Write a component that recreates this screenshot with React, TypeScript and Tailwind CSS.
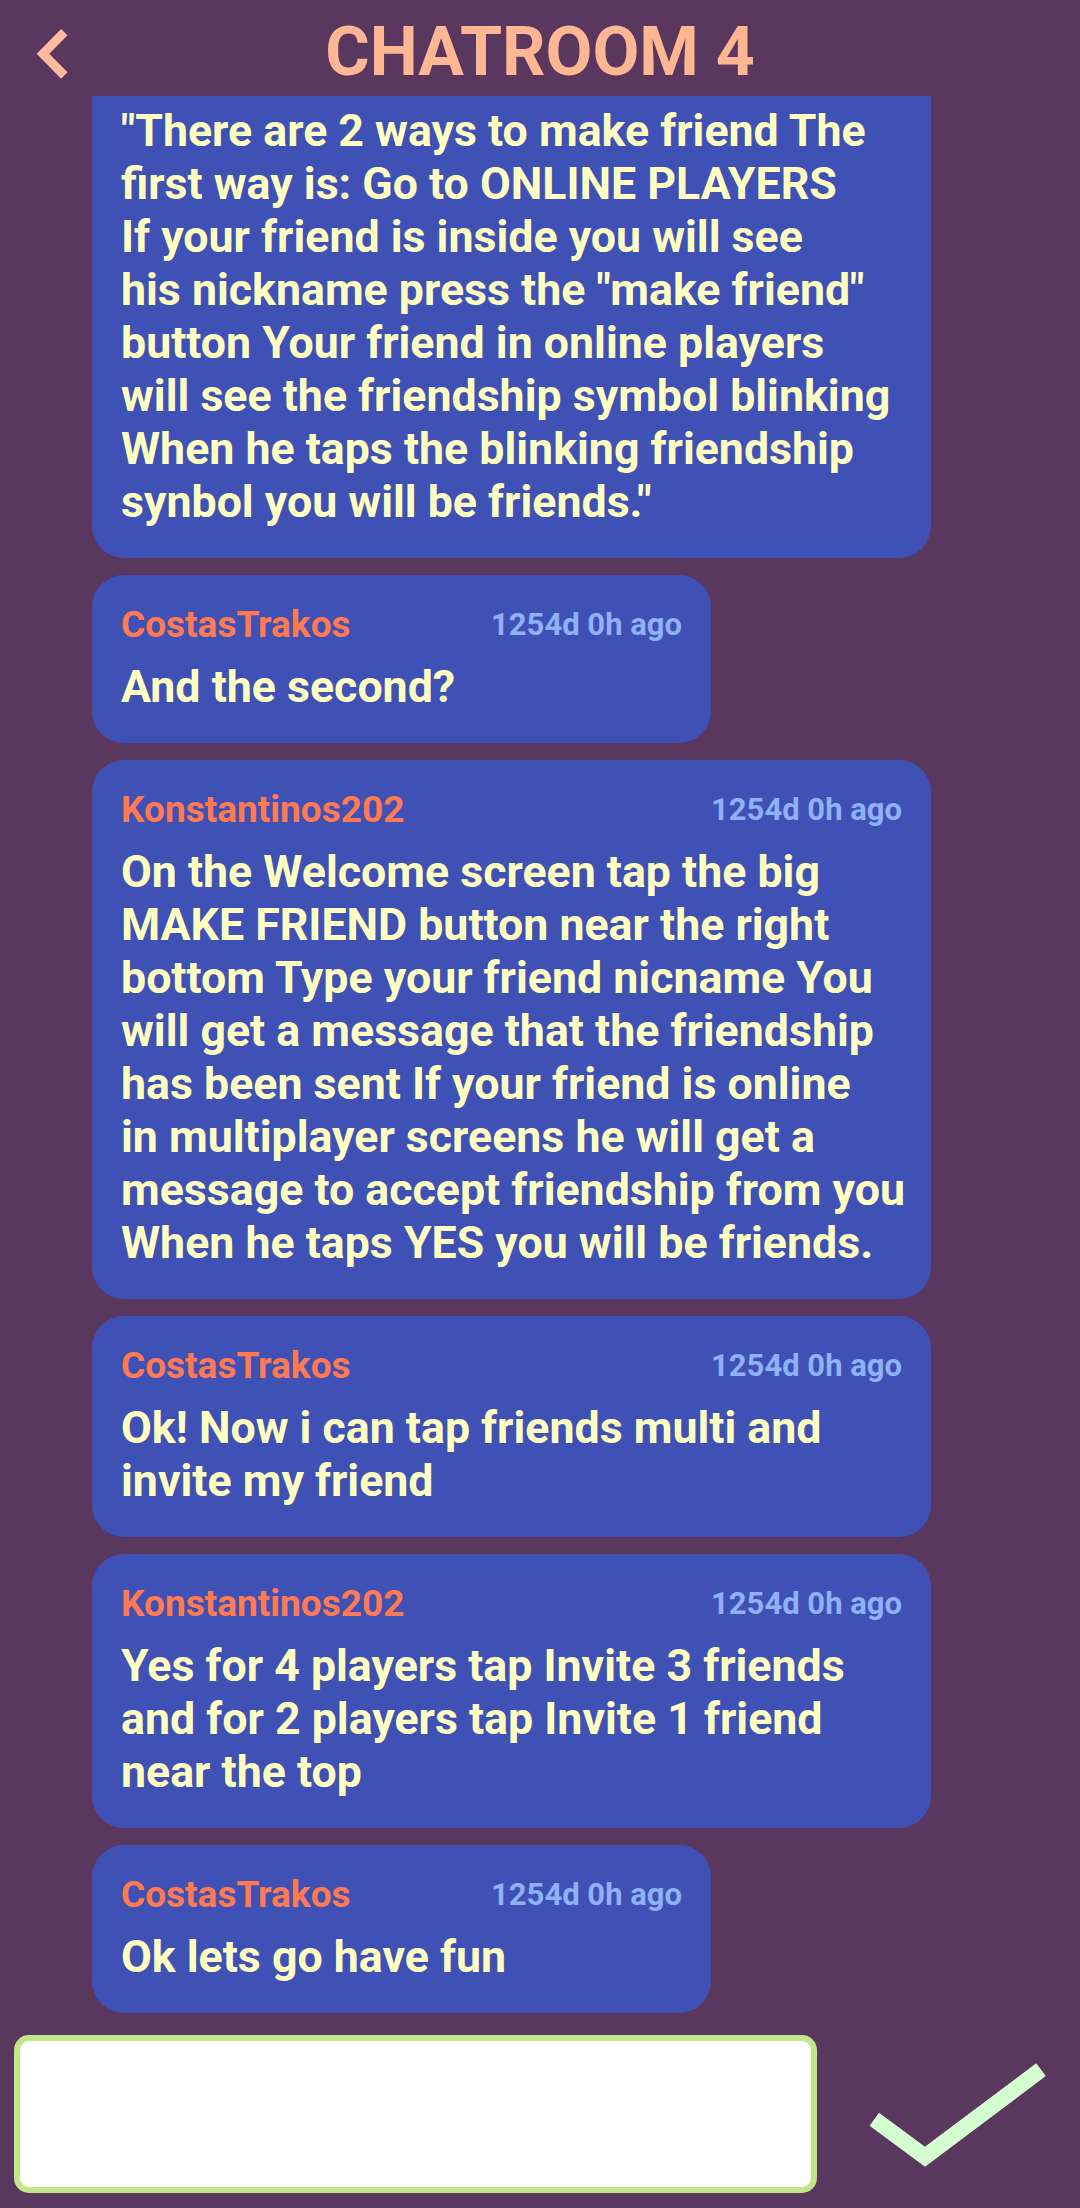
import React from "react";

type Msg = {
  name?: string;
  time?: string;
  lines: string[];
  wide?: boolean;
  clipped?: boolean;
};

const messages: Msg[] = [
  {
    clipped: true,
    wide: true,
    lines: [
      "\"There are 2 ways to make friend The",
      "first way is: Go to ONLINE PLAYERS",
      "If your friend is inside you will see",
      "his nickname press the \"make friend\"",
      "button Your friend in online players",
      "will see the friendship symbol blinking",
      "When he taps the blinking friendship",
      "synbol you will be friends.\"",
    ],
  },
  { name: "CostasTrakos", time: "1254d 0h ago", lines: ["And the second?"] },
  {
    name: "Konstantinos202",
    time: "1254d 0h ago",
    wide: true,
    lines: [
      "On the Welcome screen tap the big",
      "MAKE FRIEND button near the right",
      "bottom Type your friend nicname You",
      "will get a message that the friendship",
      "has been sent If your friend is online",
      "in multiplayer screens he will get a",
      "message to accept friendship from you",
      "When he taps YES you will be friends.",
    ],
  },
  {
    name: "CostasTrakos",
    time: "1254d 0h ago",
    wide: true,
    lines: ["Ok! Now i can tap friends multi and", "invite my friend"],
  },
  {
    name: "Konstantinos202",
    time: "1254d 0h ago",
    wide: true,
    lines: [
      "Yes for 4 players tap Invite 3 friends",
      "and for 2 players tap Invite 1 friend",
      "near the top",
    ],
  },
  { name: "CostasTrakos", time: "1254d 0h ago", lines: ["Ok lets go have fun"] },
];

const Bubble: React.FC<{ msg: Msg }> = ({ msg }) => {
  return (
    <div
      className={`bg-[#3f51b5] px-[29px] pb-[29px] ${msg.wide ? "w-[839px]" : "w-[619px]"} ${
        msg.clipped ? "rounded-b-[32px] pt-[9px]" : "rounded-[32px] pt-[29px]"
      }`}
    >
      {msg.name && (
        <div className="flex items-center justify-between h-[42px] mb-[15px]">
          <span className="text-[37px] leading-[42px] font-bold text-[#ff7a50]">{msg.name}</span>
          <span className="text-[31px] leading-[42px] font-bold text-[#8fb1f7]">{msg.time}</span>
        </div>
      )}
      <div className="text-[44.7px] leading-[53px] font-bold text-[#ffffc2]">
        {msg.lines.map((l, i) => (
          <span key={i} className="block whitespace-nowrap">
            {l}
          </span>
        ))}
      </div>
    </div>
  );
};

export default function App() {
  return (
    <div
      className="w-[1080px] h-[2208px] bg-[#5a375e] flex flex-col overflow-hidden"
      style={{ fontFamily: "Roboto, 'Noto Sans', sans-serif" }}
    >
      <header className="h-[96px] shrink-0 grid grid-cols-[1fr_auto_1fr] items-center pt-[8px]">
        <div className="pl-[30px] flex items-center">
          <svg width="45" height="57" viewBox="0 0 45 57" fill="none">
            <polyline
              points="34.3,8.2 13,29.8 34.3,51.5"
              stroke="#ffbb9c"
              strokeWidth="9"
              strokeLinecap="butt"
              strokeLinejoin="miter"
            />
          </svg>
        </div>
        <h1 className="text-[68px] leading-[78px] font-bold text-[#ffb692]">CHATROOM 4</h1>
        <div />
      </header>

      <div className="flex flex-col gap-[17px] pl-[92px]">
        {messages.map((m, i) => (
          <Bubble key={i} msg={m} />
        ))}
      </div>

      <div className="flex items-start mt-[22px]">
        <div className="ml-[14px] w-[803px] h-[158px] bg-white border-[6px] border-[#c2e68a] rounded-[15px]" />
        <svg className="ml-[43px] mt-[23px]" width="195" height="120" viewBox="0 0 195 120" fill="none">
          <polyline
            points="14.3,61.3 65,98.7 181,11.7"
            stroke="#d4fdd0"
            strokeWidth="16"
            strokeLinecap="butt"
            strokeLinejoin="miter"
          />
        </svg>
      </div>
    </div>
  );
}
